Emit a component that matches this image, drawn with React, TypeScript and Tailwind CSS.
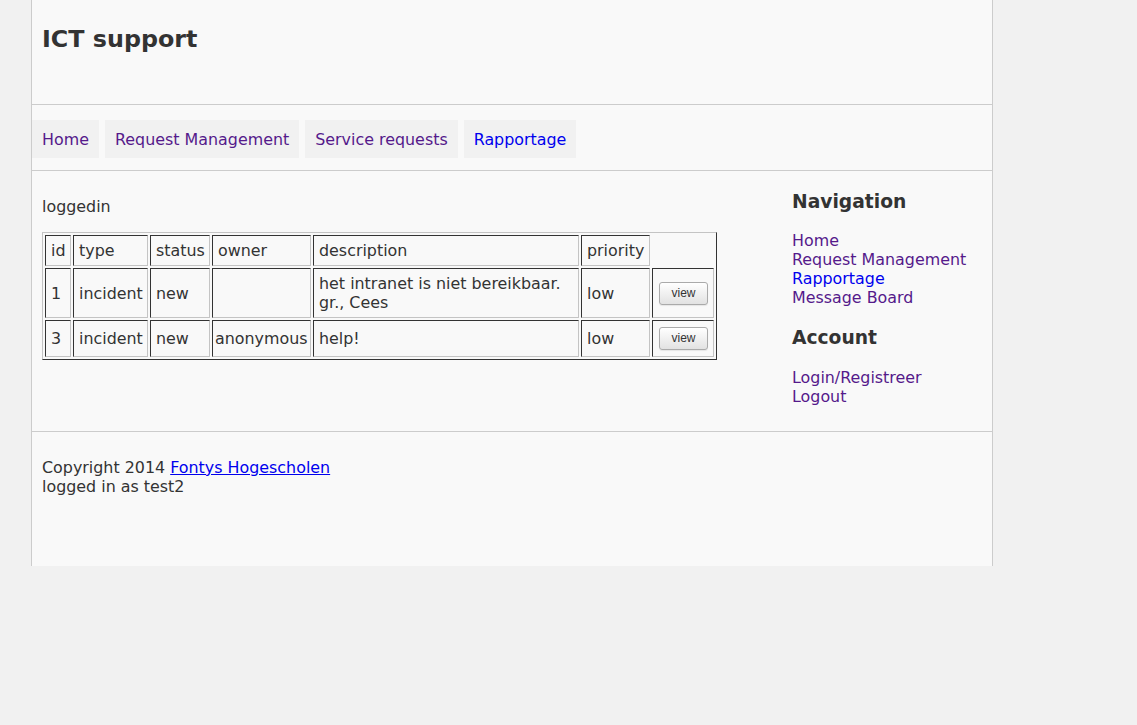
const font = { fontFamily: '"DejaVu Sans", Verdana, sans-serif' };

const navItems = [
  { label: 'Home', visited: true },
  { label: 'Request Management', visited: true },
  { label: 'Service requests', visited: true },
  { label: 'Rapportage', visited: false },
];

const rows = [
  { id: 1, type: 'incident', status: 'new', owner: '', description: ['het intranet is niet bereikbaar.', 'gr., Cees'], priority: 'low' },
  { id: 3, type: 'incident', status: 'new', owner: 'anonymous', description: ['help!'], priority: 'low' },
];

const cellBase = 'border border-t-[#333] border-l-[#333] border-b-[#c4c4c4] border-r-[#c4c4c4] text-left font-normal leading-[19px] whitespace-nowrap';
const cell = `${cellBase} px-[5px] py-[5px]`;

function ViewButton() {
  return (
    <button
      className="h-[23px] w-[49px] rounded-[3px] border border-[#aaa] bg-gradient-to-b from-[#ffffff] to-[#e2e2e2] text-[12px] leading-[21px] text-[#333] shadow-[0_1px_1px_rgba(0,0,0,0.08)]"
      style={{ fontFamily: '"Liberation Sans", Arial, sans-serif' }}
    >
      view
    </button>
  );
}

export default function App() {
  return (
    <div className="min-h-screen bg-[#f1f1f1] text-[15.9px] text-[#333]" style={font}>
      <div className="ml-[31px] w-[962px] h-[566px] border-l border-r border-[#cccccc] bg-[#f9f9f9]">
        <header className="h-[105px] border-b border-[#cccccc] px-[10px] pt-[25px]">
          <h1 className="text-[23.8px] font-bold leading-[28px] text-[#333]">ICT support</h1>
        </header>

        <nav className="h-[66px] border-b border-[#cccccc] pt-[15px]">
          <ul className="flex gap-[6px]">
            {navItems.map((n) => (
              <li key={n.label}>
                <a
                  href="#"
                  className={`block bg-[#f1f1f1] px-[10px] pt-[10px] pb-[8px] leading-[20px] ${n.visited ? 'text-[#551a8b]' : 'text-[#0000ee]'}`}
                >
                  {n.label}
                </a>
              </li>
            ))}
          </ul>
        </nav>

        <div className="flex h-[261px] border-b border-[#cccccc]">
          <main className="w-[750px] px-[10px] pt-[26px]">
            <p className="leading-[19px]">loggedin</p>
            <table className="mt-[16px] w-[675px] table-fixed border-separate border-spacing-[2px] border border-t-[#c4c4c4] border-l-[#c4c4c4] border-b-[#333] border-r-[#333]">
              <thead>
                <tr>
                  <th className={`${cell} w-[26px]`}>id</th>
                  <th className={`${cell} w-[75px]`}>type</th>
                  <th className={`${cell} w-[60px]`}>status</th>
                  <th className={`${cell} w-[99px]`}>owner</th>
                  <th className={`${cell} w-[266px]`}>description</th>
                  <th className={`${cell} w-[69px]`}>priority</th>
                  <th className="w-[62px]"></th>
                </tr>
              </thead>
              <tbody>
                {rows.map((r) => (
                  <tr key={r.id}>
                    <td className={cell}>{r.id}</td>
                    <td className={cell}>{r.type}</td>
                    <td className={cell}>{r.status}</td>
                    <td className={`${cellBase} px-[2px] py-[5px]`}>{r.owner}</td>
                    <td className={cell}>
                      {r.description.map((d, i) => (
                        <div key={i}>{d}</div>
                      ))}
                    </td>
                    <td className={cell}>{r.priority}</td>
                    <td className={`${cellBase} px-[6px] py-[6px] leading-[0px]`}>
                      <ViewButton />
                    </td>
                  </tr>
                ))}
              </tbody>
            </table>
          </main>

          <aside className="w-[210px] px-[10px] pt-[19px]">
            <h2 className="text-[18.7px] font-bold leading-[23px]">Navigation</h2>
            <ul className="mt-[18px] leading-[19px]">
              <li><a href="#" className="text-[#551a8b]">Home</a></li>
              <li><a href="#" className="text-[#551a8b]">Request Management</a></li>
              <li><a href="#" className="text-[#0000ee]">Rapportage</a></li>
              <li><a href="#" className="text-[#551a8b]">Message Board</a></li>
            </ul>
            <h2 className="mt-[19px] text-[18.7px] font-bold leading-[23px]">Account</h2>
            <ul className="mt-[19px] leading-[19px]">
              <li><a href="#" className="text-[#551a8b]">Login/Registreer</a></li>
              <li><a href="#" className="text-[#551a8b]">Logout</a></li>
            </ul>
          </aside>
        </div>

        <footer className="px-[10px] pt-[26px] leading-[19px]">
          <p>
            Copyright 2014{' '}
            <a href="#" className="text-[#0000ee] underline">Fontys Hogescholen</a>
          </p>
          <p>logged in as test2</p>
        </footer>
      </div>
    </div>
  );
}
